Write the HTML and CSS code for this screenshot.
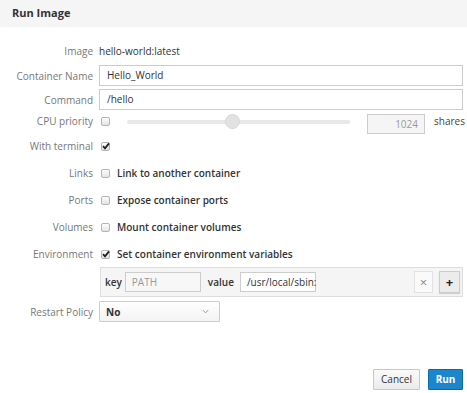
FILE: index.html
```html
<!DOCTYPE html>
<html>
<head>
<meta charset="utf-8">
<link rel="stylesheet" href="styles.css">
</head>
<body>
<div class="header">Run Image</div>
<div class="form">
  <div class="row r-image">
    <div class="label">Image</div>
    <div class="field"><span class="value">hello-world:latest</span></div>
  </div>
  <div class="row r-name">
    <div class="label">Container Name</div>
    <div class="field"><div class="input">Hello_World</div></div>
  </div>
  <div class="row r-cmd">
    <div class="label">Command</div>
    <div class="field"><div class="input">/hello</div></div>
  </div>
  <div class="row r-cpu">
    <div class="label">CPU priority</div>
    <div class="field">
      <span class="cb"></span>
      <div class="slider"><div class="track"></div><div class="thumb"></div></div>
      <div class="num">1024</div>
      <span class="shares">shares</span>
    </div>
  </div>
  <div class="row r-cb first">
    <div class="label">With terminal</div>
    <div class="field"><span class="cb on"><svg viewBox="0 0 10 10"><path d="M2 5.2 L4 7.4 L8 2.4" fill="none" stroke="#222" stroke-width="1.8"/></svg></span></div>
  </div>
  <div class="row r-cb">
    <div class="label">Links</div>
    <div class="field"><span class="cb"></span><span class="cbtext">Link to another container</span></div>
  </div>
  <div class="row r-cb">
    <div class="label">Ports</div>
    <div class="field"><span class="cb"></span><span class="cbtext">Expose container ports</span></div>
  </div>
  <div class="row r-cb">
    <div class="label">Volumes</div>
    <div class="field"><span class="cb"></span><span class="cbtext">Mount container volumes</span></div>
  </div>
  <div class="row r-cb">
    <div class="label">Environment</div>
    <div class="field"><span class="cb on"><svg viewBox="0 0 10 10"><path d="M2 5.2 L4 7.4 L8 2.4" fill="none" stroke="#222" stroke-width="1.8"/></svg></span><span class="cbtext">Set container environment variables</span></div>
  </div>
  <div class="envbox">
    <span class="envlabel">key</span>
    <div class="einput key">PATH</div>
    <span class="envlabel val">value</span>
    <div class="einput value-in">/usr/local/sbin:</div>
    <div class="spacer"></div>
    <div class="ebtn x">×</div>
    <div class="ebtn plus">+</div>
  </div>
  <div class="row r-restart">
    <div class="label">Restart Policy</div>
    <div class="field">
      <div class="select"><span>No</span><svg class="chev" viewBox="0 0 8 5"><path d="M1 1 L4 4 L7 1" fill="none" stroke="#888" stroke-width="1"/></svg></div>
    </div>
  </div>
</div>
<div class="footer">
  <div class="btn cancel">Cancel</div>
  <div class="btn run">Run</div>
</div>
</body>
</html>
```
FILE: styles.css
```css
html, body {
  margin: 0;
  padding: 0;
  background: #fff;
  font-family: "Open Sans", "DejaVu Sans", sans-serif;
  font-size: 10px;
  color: #333;
  width: 467px;
  height: 393px;
  overflow: hidden;
}
.header {
  height: 27px;
  background: #f5f5f5;
  box-sizing: border-box;
  padding-left: 12px;
  line-height: 26px;
  font-weight: 700;
  font-size: 11px;
  color: #333;
}
.form {
  padding-top: 13px;
  padding-right: 4px;
  display: flex;
  flex-direction: column;
}
.row {
  display: flex;
  align-items: center;
  height: 21px;
}
.label {
  width: 93px;
  flex: none;
  text-align: right;
  color: #777;
  white-space: nowrap;
}
.field {
  flex: 1;
  margin-left: 6px;
  display: flex;
  align-items: center;
  height: 100%;
}
.r-name { margin-top: 4px; }
.r-cmd { margin-top: 3px; }
.r-cpu { margin-top: 1px; height: 20px; }
.r-cb { margin-top: 7px; height: 20px; }
.r-cb.first { margin-top: 5px; }
.input {
  flex: 1;
  height: 21px;
  box-sizing: border-box;
  border: 1px solid #ccc;
  padding-left: 7px;
  line-height: 19px;
  color: #333;
}
.value { color: #333; padding-left: 0; }
.cb {
  width: 9px;
  height: 9px;
  flex: none;
  box-sizing: border-box;
  border: 1px solid #b5b5b5;
  border-radius: 2px;
  background: linear-gradient(#fdfdfd, #e4e4e4);
  margin-left: 2px;
  position: relative;
}
.cb svg {
  position: absolute;
  left: -1px;
  top: -2px;
  width: 10px;
  height: 10px;
}
.cbtext {
  margin-left: 7px;
  font-weight: 600;
  color: #333;
}
.slider {
  position: relative;
  width: 223px;
  height: 16px;
  margin-left: 17px;
  margin-top: 2px;
}
.track {
  position: absolute;
  left: 0;
  right: 0;
  top: 6px;
  height: 4px;
  background: #e8e8e8;
  border-radius: 2px;
}
.thumb {
  position: absolute;
  left: 98px;
  top: 0;
  width: 15px;
  height: 15px;
  box-sizing: border-box;
  border-radius: 50%;
  background: #e2e2e2;
  border: 1px solid #d8d8d8;
}
.num {
  width: 58px;
  height: 20px;
  box-sizing: border-box;
  margin-left: 17px;
  margin-top: 6px;
  border: 1px solid #ccc;
  background: #f5f5f5;
  color: #999;
  text-align: right;
  padding-right: 6px;
  line-height: 18px;
}
.shares {
  margin-left: 9px;
  color: #444;
}
.envbox {
  margin-top: 3px;
  margin-left: 100px;
  height: 30px;
  box-sizing: border-box;
  border: 1px solid #ddd;
  background: #f5f5f5;
  display: flex;
  align-items: center;
  padding: 0 2px 0 4px;
}
.envlabel {
  font-weight: 600;
  color: #333;
}
.envlabel.val { margin-left: 7px; }
.einput {
  height: 20px;
  box-sizing: border-box;
  border: 1px solid #ccc;
  line-height: 18px;
  padding-left: 6px;
  background: #fff;
}
.einput.key {
  width: 76px;
  margin-left: 3px;
  color: #999;
  background: #f7f7f7;
}
.einput.value-in {
  width: 76px;
  margin-left: 6px;
  color: #333;
}
.spacer { flex: 1; }
.ebtn {
  height: 22px;
  box-sizing: border-box;
  text-align: center;
  line-height: 20px;
}
.ebtn.x {
  width: 19px;
  border: 1px solid #e2e2e2;
  background: #fafafa;
  color: #888;
  font-size: 13px;
}
.ebtn.plus {
  width: 21px;
  margin-left: 6px;
  border: 1px solid #ccc;
  background: #ececec;
  color: #222;
  font-weight: 700;
  font-size: 13px;
  box-shadow: 0 1px 1px rgba(0,0,0,0.15);
}
.r-restart { margin-top: 4px; }
.select {
  width: 121px;
  height: 21px;
  box-sizing: border-box;
  border: 1px solid #ccc;
  border-radius: 1px;
  background: linear-gradient(#fff, #f3f3f3);
  display: flex;
  align-items: center;
  padding-left: 6px;
  padding-right: 10px;
  font-weight: 700;
  color: #333;
}
.select span { flex: 1; }
.chev { width: 7px; height: 5px; }
.footer {
  position: absolute;
  top: 369px;
  right: 4px;
  display: flex;
  gap: 8px;
}
.btn {
  height: 21px;
  box-sizing: border-box;
  line-height: 19px;
  text-align: center;
  border-radius: 1px;
}
.cancel {
  width: 47px;
  border: 1px solid #c8c8c8;
  background: linear-gradient(#fafafa, #ebebeb);
  color: #333;
}
.run {
  width: 35px;
  border: 1px solid #0b6aa8;
  background: #1c86cc;
  color: #fff;
  font-weight: 700;
}
```
